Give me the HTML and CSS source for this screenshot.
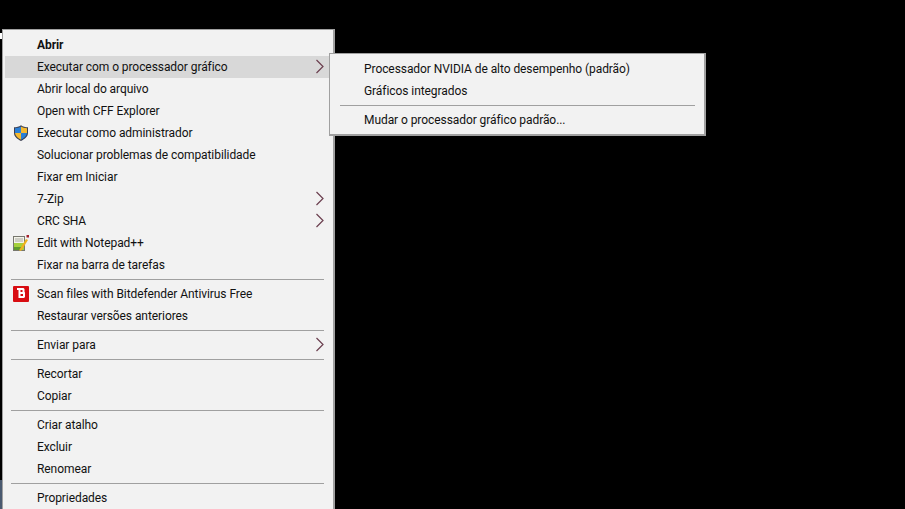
FILE: index.html
```html
<!DOCTYPE html>
<html lang="pt-BR">
<head>
<meta charset="utf-8">
<title>Menu de contexto</title>
<link rel="stylesheet" href="styles.css">
</head>
<body>
<div class="desktop">
  <div class="edge-top"></div>
  <div class="edge-bottom"></div>
  <div class="menu main-menu">
    <div class="item bold"><span>Abrir</span></div>
    <div class="item active"><span>Executar com o processador gráfico</span><svg class="chev" viewBox="0 0 10 15"><path d="M1.5 1 L8 7.5 L1.5 14"/></svg></div>
    <div class="item"><span>Abrir local do arquivo</span></div>
    <div class="item"><span>Open with CFF Explorer</span></div>
    <div class="item"><svg class="icon" viewBox="0 0 16 16"><path d="M8 .3 C10 1.8 12.3 2.3 15 2.3 V8 C15 11.5 12 14 8 15.9 C4 14 1 11.5 1 8 V2.3 C3.7 2.3 6 1.8 8 .3Z" fill="#3a3f52"/><path d="M8 1.6 V8 H2 V3.3 C4 3.3 6.3 2.9 8 1.6Z" fill="#2a7fd6"/><path d="M8 1.6 C9.7 2.9 12 3.3 14 3.3 V8 H8Z" fill="#f5b92e"/><path d="M2 8 H8 V14.7 C5 13.3 2.3 11 2 8Z" fill="#f5b92e"/><path d="M8 8 H14 C13.7 11 11 13.3 8 14.7Z" fill="#2a7fd6"/></svg><span>Executar como administrador</span></div>
    <div class="item"><span>Solucionar problemas de compatibilidade</span></div>
    <div class="item"><span>Fixar em Iniciar</span></div>
    <div class="item"><span>7-Zip</span><svg class="chev" viewBox="0 0 10 15"><path d="M1.5 1 L8 7.5 L1.5 14"/></svg></div>
    <div class="item"><span>CRC SHA</span><svg class="chev" viewBox="0 0 10 15"><path d="M1.5 1 L8 7.5 L1.5 14"/></svg></div>
    <div class="item"><svg class="icon" viewBox="0 0 16 16"><rect x="0" y="1" width="12" height="15" fill="#77776e"/><rect x="1" y="2" width="10" height="13" fill="#f4f4ea"/><path d="M1 8 H11 V15 H1Z" fill="#a5d13c"/><path d="M1 12 H8 V15 H1Z" fill="#5f9c2c"/><path d="M2 4 H10 M2 6 H10" stroke="#a8a8a0"/><path d="M6.5 14.5 L13 4 L15 5 L8.5 15.5 L6.5 16Z" fill="#f0b21c"/><rect x="13.5" y="0" width="2.5" height="2.5" fill="#a3212a"/></svg><span>Edit with Notepad++</span></div>
    <div class="item"><span>Fixar na barra de tarefas</span></div>
    <div class="sep"></div>
    <div class="item"><svg class="icon" viewBox="0 0 16 16"><rect width="16" height="16" rx="1" fill="#d80d12"/><path fill-rule="evenodd" d="M4 2 H10.5 L11.5 3 V6 L12 6.5 V11 L11 12 H5.5 V4 H4Z M7.5 4 V6 H9.5 V4Z M7.5 8 V10 H10 V8Z" fill="#fff"/></svg><span>Scan files with Bitdefender Antivirus Free</span></div>
    <div class="item"><span>Restaurar versões anteriores</span></div>
    <div class="sep"></div>
    <div class="item"><span>Enviar para</span><svg class="chev" viewBox="0 0 10 15"><path d="M1.5 1 L8 7.5 L1.5 14"/></svg></div>
    <div class="sep"></div>
    <div class="item"><span>Recortar</span></div>
    <div class="item"><span>Copiar</span></div>
    <div class="sep"></div>
    <div class="item"><span>Criar atalho</span></div>
    <div class="item"><span>Excluir</span></div>
    <div class="item"><span>Renomear</span></div>
    <div class="sep"></div>
    <div class="item"><span>Propriedades</span></div>
  </div>
  <div class="menu sub-menu">
    <div class="item"><span>Processador NVIDIA de alto desempenho (padrão)</span></div>
    <div class="item"><span>Gráficos integrados</span></div>
    <div class="sep"></div>
    <div class="item"><span>Mudar o processador gráfico padrão...</span></div>
  </div>
</div>
</body>
</html>
```
FILE: styles.css
```css
html, body { margin: 0; padding: 0; background: #000; }
.desktop { position: relative; width: 905px; height: 509px; overflow: hidden; background: #000; font-family: Roboto, sans-serif; font-size: 12px; letter-spacing: -0.07px; color: #111; }
.edge-top { position: absolute; left: 0; top: 33px; width: 2px; height: 6px; background: #fff; }
.edge-bottom { position: absolute; left: 0; top: 480px; width: 2px; height: 29px; background: #4a5a70; }
.menu { position: absolute; box-sizing: border-box; background: #f2f2f2; border: 2px solid #a0a0a0; border-width: 1px 2px 2px 1px; display: flex; flex-direction: column; }
.main-menu { left: 2px; top: 29px; width: 333px; height: 490px; padding: 4px 3px 0 2px; }
.sub-menu { left: 329px; top: 53px; width: 377px; height: 83px; padding: 4px 3px 4px 2px; }
.item { height: 22px; flex: none; display: flex; align-items: center; position: relative; padding-left: 32px; line-height: 22px; white-space: nowrap; }
.bold { font-weight: 700; }
.active { background: #d8d8d8; }
.sep { height: 7px; flex: none; position: relative; margin: 0 6px 0 6px; }
.sep::after { content: ""; display: block; position: absolute; left: 0; right: 0; top: 3px; height: 1px; background: #a0a0a0; }
.sub-menu .sep { margin: 0 6px 0 8px; }
.icon { position: absolute; left: 8px; top: 3px; width: 16px; height: 16px; }
.chev { position: absolute; right: 5px; top: 3px; width: 10px; height: 15px; fill: none; stroke: #6b3f4f; stroke-width: 1.2; }
```
